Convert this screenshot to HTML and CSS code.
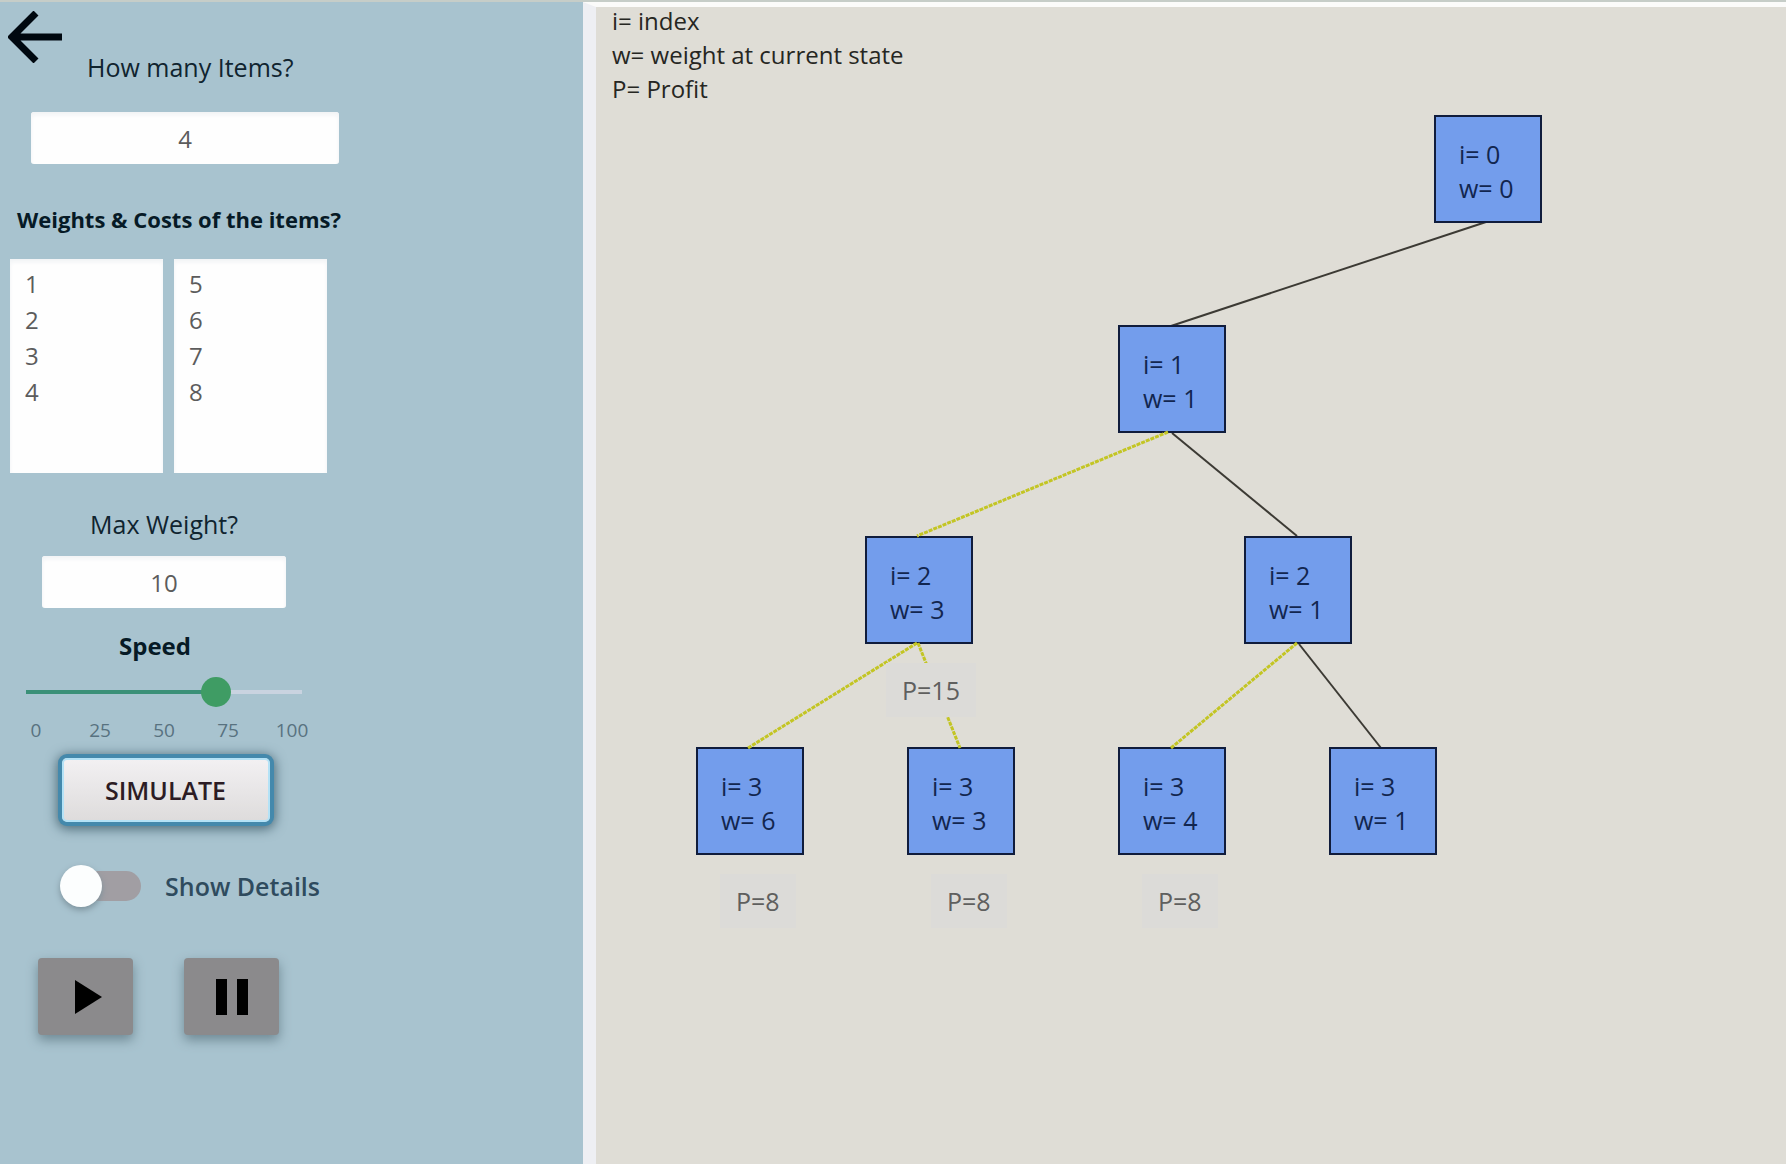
FILE: index.html
```html
<!DOCTYPE html>
<html lang="en">
<head>
<meta charset="utf-8">
<title>Knapsack Simulation</title>
<link rel="stylesheet" href="styles.css">
</head>
<body>
<div class="app">
  <aside class="sidebar">
    <div class="top-row">
      <button class="back" type="button" aria-label="Back">
        <svg width="54" height="52" viewBox="0 0 54 52"><path d="M28 2 L4 26 L28 50 M4 26 H54" fill="none" stroke="#000810" stroke-width="7"/></svg>
      </button>
      <label class="label" for="count">How many Items?</label>
    </div>
    <input class="field count" id="count" type="text" value="4">

    <h2 class="heading">Weights &amp; Costs of the items?</h2>
    <div class="lists">
      <textarea class="list" aria-label="Weights">1
2
3
4</textarea>
      <textarea class="list" aria-label="Costs">5
6
7
8</textarea>
    </div>

    <div class="settings">
      <label class="label" for="max">Max Weight?</label>
      <input class="field max" id="max" type="text" value="10">
      <label class="label speed-label" for="speed">Speed</label>
      <input class="slider" id="speed" type="range" min="0" max="100" value="71">
      <div class="ticks"><span>0</span><span>25</span><span>50</span><span>75</span><span>100</span></div>
      <button class="simulate" type="button">SIMULATE</button>
    </div>

    <label class="toggle">
      <input class="switch" type="checkbox">
      <span>Show Details</span>
    </label>

    <div class="playback">
      <button class="media" type="button" aria-label="Play">
        <svg width="32" height="36" viewBox="0 0 32 36"><path d="M5 1 L32 18 L5 35 Z"/></svg>
      </button>
      <button class="media" type="button" aria-label="Pause">
        <svg width="32" height="36" viewBox="0 0 32 36"><path d="M0 0H11V36H0Z M21 0H32V36H21Z"/></svg>
      </button>
    </div>
  </aside>

  <main class="canvas">
    <p class="legend">i= index<br>w= weight at current state<br>P= Profit</p>
    <svg class="edges" width="1190" height="1157" viewBox="0 0 1190 1157">
      <g class="edge">
        <path d="M890 215 L575 319"/>
        <path d="M576 426 L701 529"/>
        <path d="M703 637 L785 741"/>
      </g>
    </svg>
    <div class="node n0">i= 0<br>w= 0</div>
    <div class="node n1">i= 1<br>w= 1</div>
    <div class="node n2">i= 2<br>w= 3</div>
    <div class="node n3">i= 2<br>w= 1</div>
    <div class="node n4">i= 3<br>w= 6</div>
    <div class="node n5">i= 3<br>w= 3</div>
    <div class="node n6">i= 3<br>w= 4</div>
    <div class="node n7">i= 3<br>w= 1</div>
    <svg class="edges" width="1190" height="1157" viewBox="0 0 1190 1157">
      <g class="edge taken">
        <path d="M572 425 L321 529"/>
        <path d="M321 636 L152 741"/>
        <path d="M322 636 L364 741"/>
        <path d="M701 636 L575 741"/>
      </g>
    </svg>
    <div class="profit p0">P=15</div>
    <div class="profit p1">P=8</div>
    <div class="profit p2">P=8</div>
    <div class="profit p3">P=8</div>
  </main>
</div>
</body>
</html>
```
FILE: styles.css
```css
* { box-sizing: border-box; }

body {
  margin: 0;
  background: #dfddd6;
  font-family: "Open Sans", "Noto Sans", sans-serif;
  font-size: 25px;
  line-height: 34px;
  color: #10242f;
}

button, input, textarea { font: inherit; }

.app {
  display: grid;
  grid-template-columns: 583px 1fr;
  min-height: 100vh;
  border-top: 2px solid #c6cdc8;
}

.sidebar {
  display: flex;
  flex-direction: column;
  align-items: flex-start;
  background: #a8c3cf;
}

.top-row {
  display: flex;
  align-items: flex-start;
  gap: 25px;
  padding: 9px 0 0 8px;
}

.back {
  display: flex;
  padding: 0;
  border: 0;
  background: none;
}

.top-row .label { margin-top: 39px; }

.field {
  height: 52px;
  padding: 0;
  border: 0;
  border-radius: 3px;
  background: #fefefe;
  box-shadow: inset 0 3px 4px #f1f3f5;
  color: #5c5c5c;
  font-size: 24px;
  text-align: center;
}

.count {
  width: 308px;
  margin: 28px 0 0 31px;
}

.heading {
  margin: 38px 0 0 17px;
  font-size: 22px;
  font-weight: 700;
  line-height: 34px;
  color: #061a26;
}

.lists {
  display: flex;
  gap: 11px;
  margin: 23px 0 0 10px;
}

.list {
  width: 153px;
  height: 214px;
  padding: 7px 15px;
  border: 0;
  background: #fefefe;
  box-shadow: inset 0 3px 4px #f1f3f5;
  color: #5c5c5c;
  font-size: 24px;
  line-height: 36px;
  resize: none;
}

.settings {
  display: flex;
  flex-direction: column;
  align-items: center;
  width: 328px;
  margin-top: 34px;
}

.max {
  width: 244px;
  margin-top: 15px;
}

.speed-label {
  margin: 21px 18px 0 0;
  font-size: 24px;
  font-weight: 700;
  color: #061a26;
}

.slider {
  appearance: none;
  width: 276px;
  height: 30px;
  margin: 14px 0 0;
  background: linear-gradient(90deg, #3b9078 70%, #c9d3e0 70%) center / 100% 4px no-repeat;
}

.slider::-webkit-slider-thumb {
  appearance: none;
  width: 30px;
  height: 30px;
  border-radius: 50%;
  background: #3f9c64;
}

.ticks {
  display: grid;
  grid-template-columns: repeat(5, 64px);
  margin-top: 10px;
  font-size: 19px;
  line-height: 26px;
  text-align: center;
  color: #587280;
}

.simulate {
  width: 208px;
  height: 64px;
  margin: 15px 0 0 3px;
  padding: 0;
  border: 2px solid #b4e2f6;
  border-radius: 5px;
  background: linear-gradient(#f2f0f2, #dedcdc);
  box-shadow: 0 0 0 4px #4489ac, 0 2px 12px 5px #4d6b78;
  font-weight: 600;
  color: #2c1c24;
}

.toggle {
  display: flex;
  align-items: center;
  gap: 24px;
  margin: 43px 0 0 60px;
  font-weight: 600;
  color: #2f4b5e;
}

.switch {
  appearance: none;
  display: flex;
  align-items: center;
  width: 81px;
  height: 42px;
  margin: 0;
}

.switch::before {
  content: "";
  z-index: 1;
  width: 42px;
  height: 42px;
  border-radius: 50%;
  background: #fcfefe;
  box-shadow: 0 3px 6px #7c929c;
}

.switch::after {
  content: "";
  flex: 1;
  height: 30px;
  margin-left: -20px;
  border-radius: 15px;
  background: #a19ea3;
}

.playback {
  display: flex;
  gap: 51px;
  margin: 51px 0 0 38px;
}

.media {
  display: flex;
  align-items: center;
  justify-content: center;
  width: 95px;
  height: 77px;
  padding: 0;
  border: 0;
  border-radius: 4px;
  background: #8b8a8c;
  box-shadow: 0 5px 12px #6f8994;
}

.canvas {
  position: relative;
  overflow: hidden;
  border-top: 5px solid #fbfbfa;
  border-left: 13px solid #eeeff3;
  background: #dfddd6;
  color: #262622;
}

.legend {
  margin: -3px 0 0;
  padding: 0 0 0 16px;
  font-size: 24px;
}

.edges {
  position: absolute;
  top: 0;
  left: 0;
}

.edge {
  fill: none;
  stroke: #3c3a34;
  stroke-width: 2;
}

.taken {
  stroke: #c3c524;
  stroke-width: 3;
  stroke-dasharray: 4 1;
}

.node {
  position: absolute;
  width: 108px;
  height: 108px;
  padding: 20px 0 0 23px;
  border: 2px solid #101c3c;
  background: #739dec;
  color: #12264f;
}

.n0 { left: 838px; top: 108px; }
.n1 { left: 522px; top: 318px; }
.n2 { left: 269px; top: 529px; }
.n3 { left: 648px; top: 529px; }
.n4 { left: 100px; top: 740px; }
.n5 { left: 311px; top: 740px; }
.n6 { left: 522px; top: 740px; }
.n7 { left: 733px; top: 740px; }

.profit {
  position: absolute;
  padding: 10px 16px;
  background: #dcdbd8;
  color: #5f5f5e;
}

.p0 { left: 290px; top: 656px; }
.p1 { left: 124px; top: 867px; }
.p2 { left: 335px; top: 867px; }
.p3 { left: 546px; top: 867px; }
```
